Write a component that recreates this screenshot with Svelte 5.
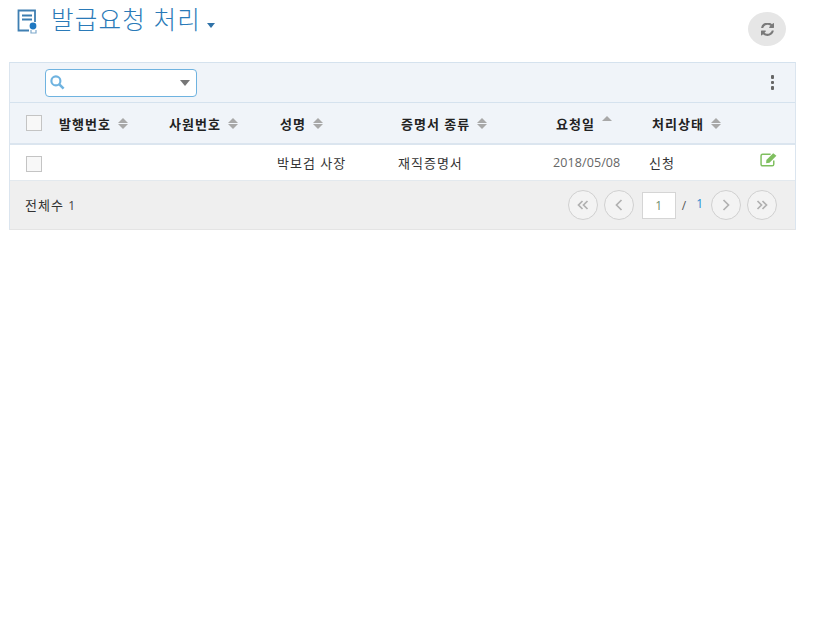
<script>
  const columns = [
    { label: '발행번호', sort: 'both' },
    { label: '사원번호', sort: 'both' },
    { label: '성명', sort: 'both' },
    { label: '증명서 종류', sort: 'both' },
    { label: '요청일', sort: 'asc' },
    { label: '처리상태', sort: 'both' }
  ];

  const rows = [
    { issueNo: '', empNo: '', name: '박보검 사장', cert: '재직증명서', date: '2018/05/08', status: '신청' }
  ];
</script>

<div class="page">
  <header class="title-bar">
    <div class="title">
      <svg class="title-icon" width="22" height="25" viewBox="0 0 22 25" aria-hidden="true">
        <path d="M18 13V1.500H1.500V21.500H12" fill="none" stroke="#3f7fb2" stroke-width="1.800" />
        <path d="M5 6.500h10M5 10.500h10" stroke="#3a7cb0" stroke-width="1.800" />
        <circle cx="16" cy="17" r="3.400" fill="#1f78c1" />
        <path d="M14 21v3h5v-3" fill="none" stroke="#7fa9cc" stroke-width="1.200" />
      </svg>
      <h1>발급요청 처리</h1>
      <span class="caret"></span>
    </div>
    <button class="refresh" aria-label="새로고침">
      <svg width="13" height="13" viewBox="0 0 1536 1536" aria-hidden="true">
        <path fill="#7a7a7a" d="M1511 928q0 5-1 7-64 268-268 434.500t-478 166.500q-146 0-282.500-55t-243.500-157l-129 129q-19 19-45 19t-45-19-19-45v-448q0-26 19-45t45-19h448q26 0 45 19t19 45-19 45l-137 137q71 66 161 102t187 36q134 0 250-65t186-179q11-17 53-117 8-23 30-23h192q13 0 22.500 9.500t9.500 22.500zM1536 64v448q0 26-19 45t-45 19h-448q-26 0-45-19t-19-45 19-45l138-138q-148-137-349-137-134 0-250 65t-186 179q-11 17-53 117-8 23-30 23h-199q-13 0-22.500-9.500t-9.500-22.500v-7q65-268 270-434.500t480-166.500q146 0 284 55.500t245 156.500l130-129q19-19 45-19t45 19 19 45z" />
      </svg>
    </button>
  </header>

  <section class="grid-box">
    <div class="toolbar">
      <div class="search">
        <svg width="15" height="15" viewBox="0 0 14 14" aria-hidden="true">
          <circle cx="5.500" cy="5.500" r="4.200" fill="none" stroke="#6fb3e0" stroke-width="2" />
          <path d="M8.700 8.700l4 4" stroke="#6fb3e0" stroke-width="2.400" />
        </svg>
        <span class="search-caret"></span>
      </div>
      <div class="dots"><i></i><i></i><i></i></div>
    </div>

    <div class="row head">
      <div class="cell check"><span class="box"></span></div>
      {#each columns as col}
        <div class="cell">
          <span class="label">{col.label}</span>
          <span class="sort" class:asc={col.sort === 'asc'}><i class="up"></i><i class="down"></i></span>
        </div>
      {/each}
      <div class="cell"></div>
    </div>

    {#each rows as row}
      <div class="row body">
        <div class="cell check"><span class="box"></span></div>
        <div class="cell">{row.issueNo}</div>
        <div class="cell">{row.empNo}</div>
        <div class="cell">{row.name}</div>
        <div class="cell">{row.cert}</div>
        <div class="cell date">{row.date}</div>
        <div class="cell">{row.status}</div>
        <div class="cell edit">
          <svg width="18" height="15" viewBox="0 0 17 14" aria-hidden="true">
            <path d="M13 8v3.500a1.500 1.500 0 0 1-1.500 1.500h-9A1.500 1.500 0 0 1 1 11.500v-8A1.500 1.500 0 0 1 2.500 2H10" fill="none" stroke="#7fbf5f" stroke-width="1.400" />
            <path d="M6 7.500L12.500 1l3 2.500L9 10l-3.200.6z" fill="#7fbf5f" />
          </svg>
        </div>
      </div>
    {/each}

    <footer class="pager-bar">
      <div class="total">전체수 <span class="count">1</span></div>
      <nav class="pager">
        <button class="nav" aria-label="처음">
          <svg width="12" height="10" viewBox="0 0 12 10"><path d="M5.500 1L1.500 5l4 4M10.500 1l-4 4 4 4" fill="none" stroke="#b0b0b0" stroke-width="1.700" /></svg>
        </button>
        <button class="nav" aria-label="이전">
          <svg width="8" height="12" viewBox="0 0 8 12"><path d="M6.500 1L1.500 6l5 5" fill="none" stroke="#b0b0b0" stroke-width="1.700" /></svg>
        </button>
        <span class="page-input">1</span>
        <span class="slash">/</span>
        <span class="page-total">1</span>
        <button class="nav" aria-label="다음">
          <svg width="8" height="12" viewBox="0 0 8 12"><path d="M1.500 1l5 5-5 5" fill="none" stroke="#b0b0b0" stroke-width="1.700" /></svg>
        </button>
        <button class="nav" aria-label="마지막">
          <svg width="12" height="10" viewBox="0 0 12 10"><path d="M1.500 1l4 4-4 4M6.500 1l4 4-4 4" fill="none" stroke="#b0b0b0" stroke-width="1.700" /></svg>
        </button>
      </nav>
    </footer>
  </section>
</div>

<style>
  :global(body) {
    background: #fff;
    font-family: "Open Sans", "Noto Sans CJK KR", sans-serif;
    color: #333;
  }

  .page {
    width: 815px;
    height: 630px;
    box-sizing: border-box;
    padding: 0 19px 0 9px;
  }

  .title-bar {
    display: flex;
    justify-content: space-between;
    height: 62px;
    box-sizing: border-box;
    padding: 9px 10px 0 8px;
  }

  .title {
    display: flex;
    align-items: flex-start;
  }

  .title-icon {
    margin-right: 12px;
  }

  h1 {
    margin: -2px 0 0;
    font-size: 24.500px;
    line-height: 26px;
    font-weight: 300;
    color: #2a7ab8;
    letter-spacing: 1.200px;
  }

  .caret {
    margin: 14px 0 0 6px;
    border-left: 4.500px solid transparent;
    border-right: 4.500px solid transparent;
    border-top: 5px solid #2f72a8;
  }

  .refresh {
    width: 38px;
    height: 34px;
    margin-top: 3px;
    border: 0;
    border-radius: 50%;
    background: #e6e6e6;
    display: flex;
    align-items: center;
    justify-content: center;
    padding: 0;
  }

  .grid-box {
    border: 1px solid #dbe5ef;
    border-bottom-color: #e4e4e4;
    border-top-color: #d5e2ee;
  }

  .toolbar {
    height: 39px;
    background: #f0f4f9;
    display: flex;
    align-items: center;
    justify-content: space-between;
    padding: 0 21px 0 35px;
  }

  .search {
    width: 152px;
    height: 28px;
    box-sizing: border-box;
    border: 1px solid #6fb3e0;
    border-radius: 4px;
    background: #fff;
    display: flex;
    align-items: center;
    justify-content: space-between;
    padding: 0 6px 0 4px;
  }

  .search-caret {
    border-left: 5.500px solid transparent;
    border-right: 5.500px solid transparent;
    border-top: 6px solid #777;
  }

  .dots {
    display: flex;
    flex-direction: column;
    gap: 2px;
  }

  .dots i {
    width: 3.500px;
    height: 3.500px;
    border-radius: 1px;
    background: #666;
  }

  .row {
    display: grid;
    grid-template-columns: 46px 110px 111px 121px 155px 96px 1fr 36px;
    align-items: center;
  }

  .head {
    height: 40px;
    background: #f0f4f9;
    border-top: 1px solid #d5e2ee;
    border-bottom: 2px solid #dbe5ef;
    font-size: 13px;
    font-weight: 700;
    color: #222;
  }

  .head .cell {
    padding-left: 3px;
    display: flex;
    align-items: center;
  }

  .head .cell.check {
    padding-left: 16px;
  }

  .label {
    letter-spacing: 1px;
  }

  .sort {
    display: inline-flex;
    flex-direction: column;
    gap: 1px;
    margin-left: 7px;
  }

  .sort .up,
  .sort .down {
    border-left: 5px solid transparent;
    border-right: 5px solid transparent;
  }

  .sort .up {
    border-bottom: 5px solid #a8a8a8;
  }

  .sort .down {
    border-top: 5px solid #a8a8a8;
  }

  .sort.asc .down {
    visibility: hidden;
  }

  .sort.asc {
    margin-top: -4px;
  }

  .body {
    height: 35px;
    background: #fff;
    border-bottom: 1px solid #e3e9ee;
    font-size: 13px;
    color: #333;
    letter-spacing: 1px;
  }

  .body .cell {
    padding-bottom: 1px;
  }

  .body .cell.check {
    padding: 2px 0 0 16px;
  }

  .body .date {
    font-size: 12.500px;
    color: #666;
    letter-spacing: 0.1px;
  }

  .body .edit {
    display: flex;
    padding-left: 1px;
    margin-top: -6px;
  }

  .box {
    display: block;
    width: 14px;
    height: 14px;
    border: 1px solid #c4c4c4;
    background: #f8f8f8;
  }

  .pager-bar {
    height: 48px;
    background: #efefef;
    display: flex;
    align-items: center;
    justify-content: space-between;
    padding: 0 18px 0 15px;
  }

  .total {
    font-size: 13px;
    color: #333;
    letter-spacing: 1px;
    margin-top: -1px;
  }

  .count {
    font-size: 12px;
    color: #444;
  }

  .pager {
    display: flex;
    align-items: center;
  }

  .nav {
    width: 30px;
    height: 30px;
    box-sizing: border-box;
    border: 1px solid #d0d0d0;
    border-radius: 50%;
    background: #f3f3f3;
    padding: 0;
    display: flex;
    align-items: center;
    justify-content: center;
    margin-left: 6px;
  }

  .page-input {
    width: 34px;
    height: 27px;
    box-sizing: border-box;
    margin-left: 8px;
    border: 1px solid #d5d5d5;
    background: #fff;
    font-size: 12px;
    line-height: 25px;
    text-align: center;
    color: #6f8f6f;
  }

  .slash {
    margin-left: 6px;
    font-size: 12px;
    color: #555;
  }

  .page-total {
    margin: -3px 8px 0 10px;
    font-size: 12px;
    color: #2a8ad0;
  }

  .page-total + .nav {
    margin-left: 0;
  }
</style>
